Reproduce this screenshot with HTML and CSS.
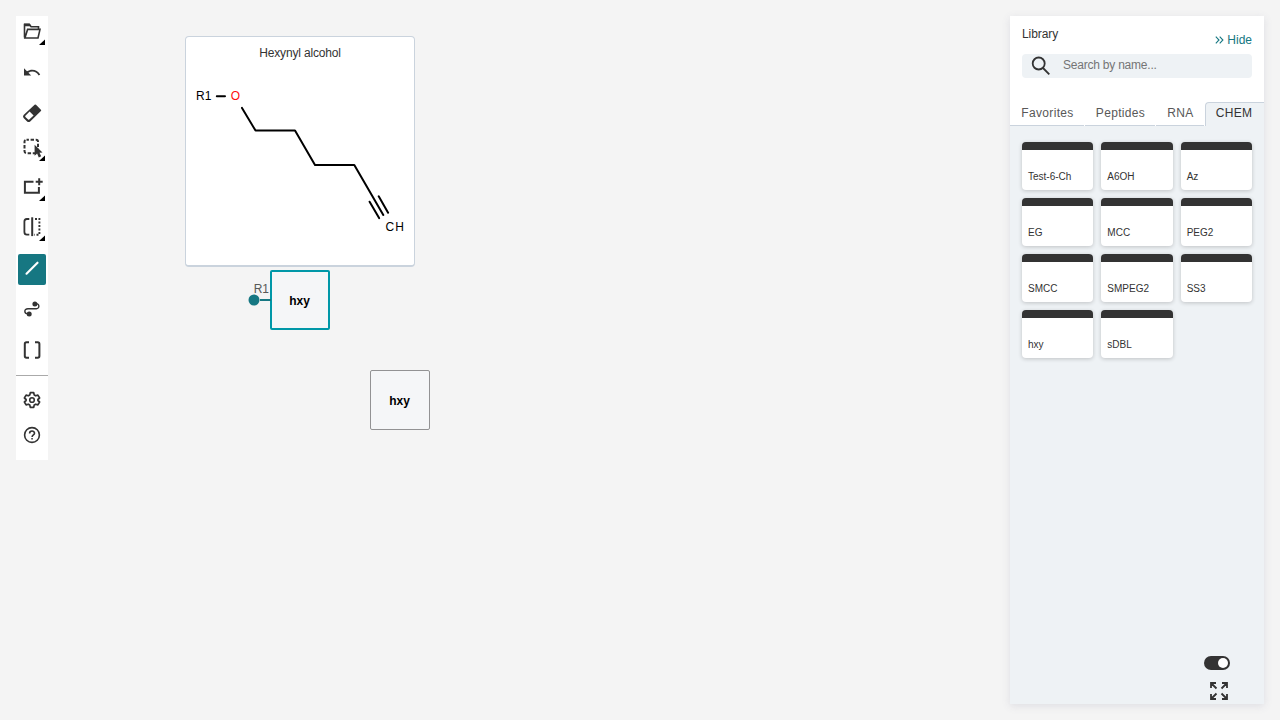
FILE: index.html
```html
<!DOCTYPE html>
<html lang="en">
<head>
<meta charset="utf-8">
<title>Macromolecules editor</title>
<link rel="stylesheet" href="styles.css">
</head>
<body>
<div class="app">
  <nav class="toolbar">
    <button class="tool tool-open" aria-label="Open"><svg viewBox="16 16 32 36"><path class="line" d="M24.500 37.500V24.500h5l1.600 2.200h7.400v2.300M24.900 38l2.700-8.600h12.400l-2 8.600z"/><path class="fill" d="M24 23.600h5.600l1.600 2.600H24z"/><path class="corner" d="M45 39.500v5.500h-6z"/></svg></button>
    <button class="tool tool-undo" aria-label="Undo"><svg viewBox="16 52 32 40"><path class="fill" d="M24 68.200v7.200h7.200l-2.800-2.700c3.600-2.400 8-1.300 10.300 2.700l1.500-.8c-2.700-5-8.600-6.300-13.200-3.300z"/></svg></button>
    <button class="tool tool-erase" aria-label="Erase"><svg viewBox="16 92 32 42"><path class="fill" fill-rule="evenodd" d="M34.600 104.800q.7-.7 1.400 0l4.900 4.900q.7.7 0 1.400L30.200 121.400q-1.600 1.300-3.100 0l-3.500-3.500q-1.200-1.500 0-3zM29.600 111.600l-4.200 4.100q-.5.600 0 1.200l2.700 2.700q.6.500 1.200 0l4.300-4.100z"/></svg></button>
    <button class="tool tool-select" aria-label="Select"><svg viewBox="16 134 32 34"><rect class="line dashed" x="24.500" y="139.700" width="13.500" height="13.500" rx="2"/><path class="fill" d="M34.600 144.800v11l2.500-2.200 1.700 3.800 2.400-1.100-1.700-3.500 3-.4z"/><path class="corner" d="M45 155.500v5.500h-6z"/></svg></button>
    <button class="tool tool-shape" aria-label="Rectangle"><svg viewBox="16 168 32 40"><path class="line thick" d="M33.500 181.800h-8.600v10.900h14v-5.700M35.700 181.800h7M39.200 178.300v7"/><path class="corner" d="M45 195.500v5.500h-6z"/></svg></button>
    <button class="tool tool-flip" aria-label="Flip"><svg viewBox="16 208 32 40"><path class="line flip-half" d="M29.300 219h-2.500q-2.400 0-2.400 2.600v10.500q0 2.600 2.400 2.600h2.500"/><path class="line thick" d="M32.200 217.300v18.800"/><path class="line dotted" d="M35 219h4.400v15.700h-5"/><path class="corner" d="M45 235.500v5.500h-6z"/></svg></button>
    <button class="tool tool-bond" aria-label="Single bond"><svg viewBox="18 254 28 31"><path d="M26.500 273.700l11-11" stroke="#fff" stroke-width="2.100" stroke-linecap="round"/></svg></button>
    <button class="tool tool-snake" aria-label="Snake mode"><svg viewBox="16 289 32 40"><circle class="fill" cx="34.900" cy="303.900" r="2.500"/><circle class="fill" cx="29.200" cy="314" r="2.500"/><path class="line thin" d="M35.500 303.700c4.500-.6 4.200 5 .9 5H28c-4.300 0-4.100 5.100 0 5.100"/></svg></button>
    <button class="tool tool-bracket" aria-label="Bracket"><svg viewBox="16 329 32 42"><path class="line thick" d="M29 342.300h-2.500q-1.700 0-1.700 1.700v12q0 1.700 1.700 1.700H29M35 342.300h2.700q1.700 0 1.700 1.700v12q0 1.700-1.700 1.700H35"/></svg></button>
    <hr class="divider">
    <button class="tool tool-settings" aria-label="Settings"><svg viewBox="16 380 32 40"><path class="line gear" d="M30.300 392.700h3.400l.5 2.200 1.500.9 2.200-.7 1.700 2.900-1.700 1.500v1l1.700 1.500-1.700 2.900-2.200-.7-1.500.9-.5 2.200h-3.400l-.5-2.200-1.500-.9-2.200.7-1.700-2.900 1.700-1.500v-1l-1.700-1.500 1.700-2.900 2.200.7 1.500-.9z"/><circle class="line" cx="32" cy="400" r="2.300"/></svg></button>
    <button class="tool tool-help" aria-label="Help"><svg viewBox="16 420 32 30"><circle class="line" cx="32" cy="435" r="7.400"/><path class="line" d="M29.600 433.500c0-3.200 4.900-3.200 4.900-.2 0 1.700-2.400 1.700-2.400 3.800"/><path class="fill" d="M31.300 438h1.500v1.600h-1.500z"/></svg></button>
  </nav>

  <main class="canvas">
    <section class="preview">
      <h2 class="preview-title">Hexynyl alcohol</h2>
      <svg class="molecule" viewBox="186 62 228 203">
        <path class="bond" d="M216.800 96.300h8.200M242 107.900l13.500 22.600h39.500l20 34.500h39.300l29 50M378.700 196.300l9.400 16.400M369.600 201.700l9.500 16.400"/>
        <text x="196" y="100.200">R1</text>
        <text class="oxygen" x="230.700" y="100.200">O</text>
        <text x="385.500" y="230.900">C</text><text x="395.200" y="230.900">H</text>
      </svg>
    </section>
    <div class="monomer monomer-selected">hxy</div>
    <svg class="attachment" viewBox="246 282 26 26"><path d="M260 300h11" stroke="#167782" stroke-width="2"/><circle cx="254" cy="300" r="5.500" fill="#167782"/><text x="253.700" y="293">R1</text></svg>
    <div class="monomer monomer-plain">hxy</div>
  </main>

  <aside class="library">
    <header class="library-head">
      <div class="title-row">
        <span class="library-title">Library</span>
        <button class="hide"><svg viewBox="0 0 9 8"><path d="M.8.700L4 4 .8 7.300M4.700.700L7.900 4 4.700 7.300"/></svg>Hide</button>
      </div>
      <label class="search">
        <svg viewBox="0 0 20 20"><circle cx="7.700" cy="7.500" r="6" /><path d="M12 12l6.300 6.300"/></svg>
        <input type="text" placeholder="Search by name...">
      </label>
    </header>
    <div class="tabs">
      <button class="tab tab-favorites">Favorites</button>
      <button class="tab tab-peptides">Peptides</button>
      <button class="tab tab-rna">RNA</button>
      <button class="tab tab-chem">CHEM</button>
    </div>
    <div class="cards">
      <div class="card">Test-6-Ch</div><div class="card">A6OH</div><div class="card">Az</div>
      <div class="card">EG</div><div class="card">MCC</div><div class="card">PEG2</div>
      <div class="card">SMCC</div><div class="card">SMPEG2</div><div class="card">SS3</div>
      <div class="card">hxy</div><div class="card">sDBL</div>
    </div>
    <footer class="controls">
      <div class="switch"><span class="knob"></span></div>
      <svg class="fullscreen" viewBox="0 0 18 18"><path d="M6 1H1v5M1 1l5.500 5.500M12 1h5v5M17 1l-5.500 5.500M1 12v5h5M1 17l5.500-5.500M17 12v5h-5M17 17l-5.500-5.500"/></svg>
    </footer>
  </aside>
</div>
</body>
</html>
```
FILE: styles.css
```css
* { box-sizing: border-box; }
body {
  margin: 0;
  background: #f4f4f4;
  color: #333;
  font: 12px/14px "Liberation Sans", Arial, sans-serif;
}
button {
  padding: 0;
  border: 0;
  background: none;
  color: inherit;
  font: inherit;
}
svg { display: block; }
.app {
  display: flex;
  align-items: flex-start;
  height: 720px;
  padding: 16px;
  overflow: hidden;
}

/* Toolbar */
.toolbar {
  display: flex;
  flex-direction: column;
  width: 32px;
  height: 444px;
  background: #fff;
}
.tool { width: 32px; flex: none; }
.tool svg { width: 100%; height: 100%; }
.tool path, .tool circle, .tool rect { fill: none; }
.tool .fill { fill: #333; }
.tool .corner { fill: #000; }
.tool .line { stroke: #333; stroke-width: 1.6; }
.tool .thick { stroke-width: 2; }
.tool .flip-half { stroke-width: 1.8; }
.tool .thin { stroke-width: 1.4; }
.tool .gear { stroke-width: 1.7; stroke-linejoin: round; }
.tool .dashed { stroke-width: 2; stroke-dasharray: 3.4 1.7; stroke-dashoffset: 1; }
.tool .dotted { stroke-width: 1.9; stroke-dasharray: 2 1.5; }
.tool-open { height: 36px; }
.tool-undo { height: 40px; }
.tool-erase { height: 42px; }
.tool-select { height: 34px; }
.tool-shape, .tool-flip { height: 40px; }
.tool-bond {
  width: 28px;
  height: 31px;
  margin: 6px 2px 4px;
  border-radius: 2px;
  background: #167782;
}
.tool-snake { height: 40px; }
.tool-bracket { height: 42px; }
.divider {
  width: 32px;
  height: 1px;
  margin: 4px 0;
  border: 0;
  background: #aaa;
}
.tool-settings { height: 40px; }
.tool-help { height: 30px; }

/* Canvas: monomers sit at free positions */
.canvas {
  position: relative;
  flex: 1;
  height: 688px;
}
.preview {
  position: absolute;
  left: 137px;
  top: 20px;
  width: 230px;
  height: 231px;
  border: 1px solid #cad3dd;
  border-bottom-width: 2px;
  border-radius: 4px;
  background: #fff;
}
.preview-title {
  margin: 9px 0 2px;
  font-size: 12px;
  font-weight: 400;
  letter-spacing: -.17px;
  text-align: center;
}
.molecule { width: 228px; height: 203px; }
.molecule text { fill: #000; font-size: 12px; }
.molecule .oxygen { fill: #ff0d0d; }
.bond {
  fill: none;
  stroke: #000;
  stroke-width: 2;
  stroke-linecap: round;
  stroke-linejoin: round;
}
.monomer {
  position: absolute;
  display: flex;
  align-items: center;
  justify-content: center;
  width: 60px;
  height: 60px;
  padding: 1px 1px 0 0;
  border: 1px solid #929294;
  border-radius: 2px;
  background: #f5f6f8;
  color: #000;
  font-weight: 700;
}
.monomer-selected { left: 222px; top: 254px; border: 2px solid #0097a8; }
.monomer-plain { left: 322px; top: 354px; }
.attachment {
  position: absolute;
  left: 198px;
  top: 266px;
  width: 26px;
  height: 26px;
  overflow: visible;
}
.attachment text { fill: #585858; font-size: 12px; }

/* Library */
.library {
  display: flex;
  flex-direction: column;
  width: 254px;
  height: 688px;
  background: #eef2f5;
  box-shadow: 0 2px 8px rgba(103, 104, 132, .15);
}
.library-head { height: 86px; padding: 11px 12px 0; background: #fff; }
.title-row { display: flex; justify-content: space-between; height: 27px; }
.library-title { color: #333; letter-spacing: -.08px; }
.hide {
  display: flex;
  align-items: center;
  gap: 3px;
  height: 14px;
  margin-top: 6px;
  color: #167782;
}
.hide svg { width: 9px; height: 8px; }
.hide path { fill: none; stroke: #167782; stroke-width: 1.1; }
.search {
  display: flex;
  align-items: center;
  height: 24px;
  padding: 0 9px;
  border-radius: 4px;
  background: #eef2f5;
}
.search svg { width: 20px; height: 20px; }
.search circle, .search path { fill: none; stroke: #333; stroke-width: 1.8; }
.search input {
  width: 170px;
  height: 24px;
  margin-left: 12px;
  padding: 0 0 2px;
  border: 0;
  background: none;
  font: inherit;
  letter-spacing: -.22px;
}
.search input::placeholder { color: #757575; }
.tabs { display: flex; gap: 1px; height: 24px; background: #fff; }
.tab {
  height: 24px;
  padding: 0 0 1px 1px;
  border-bottom: 1px solid #cad3dd;
  color: #585858;
  letter-spacing: .34px;
}
.tab-favorites { width: 74px; }
.tab-peptides { width: 70px; }
.tab-rna { width: 48px; }
.tab-chem {
  width: 59px;
  padding: 0 2px 3px 0;
  border: 1px solid #cad3dd;
  border-right: 0;
  border-bottom: 0;
  border-radius: 4px 0 0 0;
  background: #eef2f5;
  color: #333;
}
.cards {
  display: grid;
  grid-template-columns: repeat(3, 1fr);
  gap: 8px;
  padding: 16px 12px;
}
.card {
  height: 48px;
  padding: 21px 6px 0;
  border-top: 8px solid #333;
  border-radius: 4px;
  background: #fff;
  box-shadow: 0 1px 4px rgba(0, 0, 0, .2);
  font-size: 10px;
  line-height: 12px;
}
.controls {
  display: flex;
  flex-direction: column;
  align-items: flex-end;
  gap: 12px;
  margin-top: auto;
  padding: 0 34px 4px;
}
.switch {
  display: flex;
  justify-content: flex-end;
  width: 26px;
  height: 14px;
  padding: 2px;
  border-radius: 7px;
  background: #333;
}
.knob { width: 10px; height: 10px; border-radius: 50%; background: #fff; }
.fullscreen { width: 18px; height: 18px; margin-right: 2px; }
.fullscreen path { fill: none; stroke: #333; stroke-width: 1.8; }
```
